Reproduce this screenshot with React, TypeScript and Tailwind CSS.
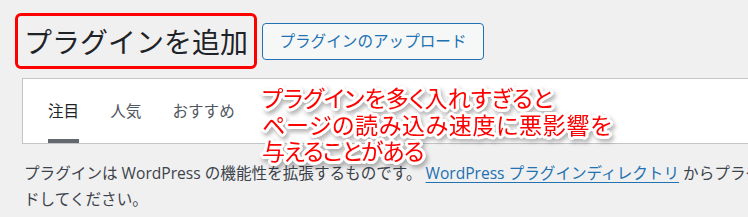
import React from 'react';

const tabs = ['注目', '人気', 'おすすめ'];

export default function App() {
  return (
    <div className="relative w-[748px] h-[217px] overflow-hidden bg-[#f0f0f1] font-['Open_Sans','Noto_Sans_CJK_JP',sans-serif] text-[#3c434a]">
      {/* title row */}
      <div className="flex items-center gap-[5px] pl-[15px] pt-[13px]">
        <div className="flex h-[56px] w-[242px] items-center rounded-[6px] border-[3px] border-[#ff0000] pl-[6px]">
          <h1 className="text-[28px] leading-none text-[#1d2327] font-['Noto_Sans_CJK_JP',sans-serif]">プラグインを追加</h1>
        </div>
        <button className="h-[37px] w-[222px] rounded-[4px] border border-[#2271b1] bg-[#f6f7f7] text-[15.6px] leading-none text-[#2271b1] font-['Noto_Sans_CJK_JP',sans-serif]">
          プラグインのアップロード
        </button>
      </div>

      {/* filter tabs */}
      <div className="ml-[22px] mr-[-10px] mt-[9px] flex h-[66px] gap-[31px] border border-[#c3c4c7] bg-white pl-[25px]">
        {tabs.map((t, i) => (
          <div key={t} className="flex h-full flex-col pt-[19px]">
            <span className={`text-[15.6px] leading-[24px] font-['Noto_Sans_CJK_JP',sans-serif] ${i === 0 ? 'text-[#1d2327]' : 'text-[#50575e]'}`}>{t}</span>
            <div className="flex-1" />
            <div className={`h-[4px] ${i === 0 ? 'bg-[#646970]' : 'bg-transparent'}`} />
          </div>
        ))}
      </div>

      {/* description */}
      <p className="ml-[24px] mt-[17px] whitespace-nowrap text-[15.6px] leading-[25.5px]">
        プラグインは WordPress の機能性を拡張するものです。
        <a href="#" className="ml-[4px] text-[#2271b1] underline underline-offset-[3px]">WordPress プラグインディレクトリ</a>
        {' '}からプラグインを自動的にインストールするか、.zip 形式のプラグインをこのページでアップロー
        <br />
        ドしてください。
      </p>

      {/* annotation */}
      <div className="absolute left-[262px] top-[84px] [filter:drop-shadow(2px_3px_2px_rgba(0,0,0,0.3))]">
        <p className="flex flex-col whitespace-nowrap text-[23px] leading-[26.5px] text-[#ff0000] font-['Noto_Sans_CJK_JP',sans-serif] [font-feature-settings:'palt'] [text-shadow:3px_0_0_#fff,-3px_0_0_#fff,0_3px_0_#fff,0_-3px_0_#fff,2px_2px_0_#fff,-2px_2px_0_#fff,2px_-2px_0_#fff,-2px_-2px_0_#fff,3px_1px_0_#fff,-3px_1px_0_#fff,3px_-1px_0_#fff,-3px_-1px_0_#fff,1px_3px_0_#fff,-1px_3px_0_#fff,1px_-3px_0_#fff,-1px_-3px_0_#fff,0_0_4px_#fff]">
          <span>プラグインを多く入れすぎると</span>
          <span className="tracking-[0.7px]">ページの読み込み速度に悪影響を</span>
          <span className="tracking-[-1px]">与えることがある</span>
        </p>
      </div>
    </div>
  );
}
